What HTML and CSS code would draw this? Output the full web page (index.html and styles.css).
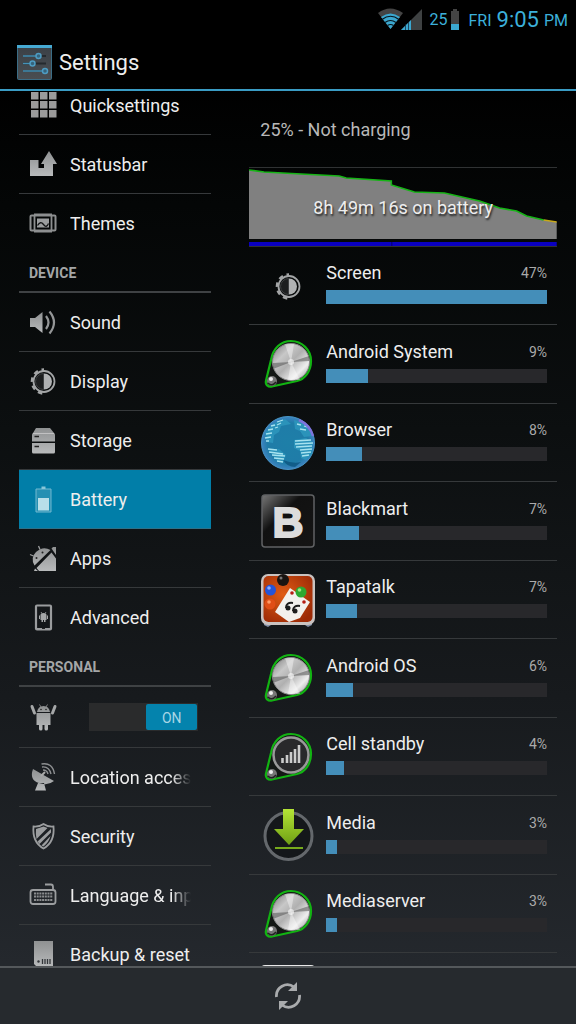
FILE: index.html
```
<!DOCTYPE html>
<html lang="en">
<head>
    <meta charset="UTF-8">
    <meta name="viewport" content="width=device-width, initial-scale=1.0">
    <title>Settings</title>
    <link rel="stylesheet" href="styles.css">
</head>
<body>
    <!-- Shared shapes -->
    <svg class="defs" aria-hidden="true">
        <defs>
            <linearGradient id="grey" x1="0" y1="0" x2="0" y2="1">
                <stop offset="0" stop-color="#8f9192"/>
                <stop offset="1" stop-color="#b8babb"/>
            </linearGradient>
            <linearGradient id="metal" x1="0" y1="0" x2="1" y2="1">
                <stop offset="0" stop-color="#777"/>
                <stop offset=".3" stop-color="#c8c8c8"/>
                <stop offset=".5" stop-color="#b0b0b0"/>
                <stop offset=".75" stop-color="#eee"/>
                <stop offset="1" stop-color="#888"/>
            </linearGradient>
            <radialGradient id="ocean" cx=".5" cy=".5" r=".55">
                <stop offset="0" stop-color="#1e7fa8"/>
                <stop offset=".7" stop-color="#1f7ca8"/>
                <stop offset="1" stop-color="#4c86cc"/>
            </radialGradient>
            <linearGradient id="gloss" x1="0" y1="0" x2="1" y2="1">
                <stop offset="0" stop-color="#777"/>
                <stop offset=".38" stop-color="#111"/>
                <stop offset="1" stop-color="#151515"/>
            </linearGradient>
            <radialGradient id="orange" cx=".4" cy=".4" r=".7">
                <stop offset="0" stop-color="#e05c14"/>
                <stop offset="1" stop-color="#9c2a06"/>
            </radialGradient>
            <linearGradient id="lime" x1="0" y1="0" x2="0" y2="1">
                <stop offset="0" stop-color="#b4e436"/>
                <stop offset="1" stop-color="#6f9f14"/>
            </linearGradient>
            <linearGradient id="tile" x1="0" y1="0" x2="0" y2="1">
                <stop offset="0" stop-color="#3a4046"/>
                <stop offset="1" stop-color="#4a4e52"/>
            </linearGradient>
            <symbol id="brightness" viewBox="0 0 28 28">
                <circle cx="15" cy="14.500" r="10.500" fill="none" stroke="#a3a5a6" stroke-width="1.800"/>
                <path d="M15 2.500a12 12 0 0 0 0 24" fill="none" stroke="#a3a5a6" stroke-width="2.600" stroke-dasharray="4.500 3.800" stroke-dashoffset="2"/>
                <path d="M15 6.500a8 8 0 0 1 0 16z" fill="#b0b2b3"/>
                <path d="M14.500 6.500a8 8 0 0 0 0 16z" fill="#1c1e1f" stroke="#4a4c4e" stroke-width=".8"/>
            </symbol>
            <symbol id="pin" viewBox="0 0 54 54">
                <path d="M10 23C12 11 20 4 30 4c11 0 20 9 20 20 0 10-6 18-14 20L11 49.500c-4 1-7-2-6-6z" fill="#141815" stroke="#12b312" stroke-width="2.200"/>
                <circle cx="11" cy="44" r="5" fill="#777"/>
                <circle cx="10" cy="42" r="2" fill="#eee"/>
                <path d="M7 46q4 4 8-1" fill="none" stroke="#222" stroke-width="1.500"/>
            </symbol>
            <symbol id="dial" viewBox="0 0 54 54">
                <use href="#pin"/>
                <circle cx="30" cy="25" r="18.500" fill="url(#metal)" stroke="#8c8c8c"/>
                <path d="M30 25 12 26v6zM30 25l18-6v5z" fill="#555" opacity=".55"/>
                <path d="M30 25 24 7h9zM30 25l-3 18h12z" fill="#fff" opacity=".4"/>
                <circle cx="30" cy="25" r="3" fill="#fff" opacity=".6"/>
            </symbol>
        </defs>
    </svg>

    <div class="status-bar">
        <svg class="signal" viewBox="0 0 46 24" aria-hidden="true">
            <path d="M1 6q12-9 25 0L13.500 22z" fill="#444"/>
            <path d="M4 10q9.500-7 19 0L13.500 22z" fill="#3ba7cf"/>
            <path d="M5 12.500q8.500-6.500 17 0M8 15.500q5.500-4 11 0M10.500 18.500q3-2 6 0" fill="none" stroke="#07141a" stroke-width="1.200"/>
            <path d="M45 2v21H24z" fill="#3e4142"/>
            <path d="M34 13v10H24z" fill="#3ba7cf"/>
            <path d="M28.500 17v6M31.500 15v8" stroke="#123" stroke-width=".7"/>
        </svg>
        <span class="level">25</span>
        <svg class="cell" viewBox="0 0 8 22" aria-hidden="true">
            <path d="M2 1h4v2h2v19H0V3h2z" fill="#444"/>
            <path d="M0 16h8v6H0z" fill="#3ba7cf"/>
        </svg>
        <span class="day">FRI</span>
        <span class="clock">9:05</span>
        <span class="day">PM</span>
    </div>

    <header class="title-bar">
        <svg class="logo" viewBox="0 0 35 35" aria-hidden="true">
            <rect x=".5" y=".5" width="34" height="34" rx="1" fill="url(#tile)" stroke="#3b6d86"/>
            <path d="M0 1.500h35" stroke="#46a9d2" stroke-width="3"/>
            <path d="M6 11h23M6 18.500h23M6 26h22" stroke="#252a2e" stroke-width="2"/>
            <path d="M6 11h13M6 18.500h7M6 26h19" stroke="#4592b8" stroke-width="1.300"/>
            <g fill="#36647c" stroke="#4e9cc2" stroke-width="1.500">
                <circle cx="21.500" cy="11" r="2.500"/>
                <circle cx="15.500" cy="18.500" r="2.500"/>
                <circle cx="28" cy="26" r="2.500"/>
            </g>
        </svg>
        <h1>Settings</h1>
    </header>

    <main>
        <nav class="menu">
            <a class="row" href="#quicksettings">
                <svg viewBox="0 0 28 28"><path d="M2 1h7.500v7.500H2zM11 1h7.500v7.500H11zM20 1h7.500v7.500H20zM2 10h7.500v7.500H2zM11 10h7.500v7.500H11zM20 10h7.500v7.500H20zM2 19h7.500v7.500H2zM11 19h7.500v7.500H11zM20 19h7.500v7.500H20z" fill="#9b9b9b"/></svg>
                <span>Quicksettings</span>
            </a>
            <a class="row" href="#statusbar">
                <svg viewBox="0 0 28 28"><path d="M1 10h8.500v8h5.500v-4h-3L20 1l8 13h-4v12H1z" fill="url(#grey)"/></svg>
                <span>Statusbar</span>
            </a>
            <a class="row last" href="#themes">
                <svg viewBox="0 0 28 28">
                    <rect x="1.500" y="6.500" width="25" height="15" rx="1" fill="none" stroke="#8d8f90" stroke-width="2"/>
                    <path d="M5 5.500h18M5 22.500h18" stroke="#8d8f90" stroke-width="2"/>
                    <path d="M5.500 6v16M22.500 6v16" stroke="#8d8f90" stroke-width="1.800"/>
                    <rect x="8" y="9.500" width="12" height="9" fill="#9c9e9f"/>
                    <path d="M8.500 16.500q3-5 6-1t5-1" fill="none" stroke="#151617" stroke-width="1.300"/>
                </svg>
                <span>Themes</span>
            </a>

            <h2>DEVICE</h2>
            <a class="row" href="#sound">
                <svg viewBox="0 0 28 28">
                    <path d="M1 10h5l7.500-6v21L6 19H1z" fill="url(#grey)"/>
                    <path d="M17 8q5 6.500 0 13M20.500 3.500q9 11 0 22" fill="none" stroke="#949697" stroke-width="2.200"/>
                </svg>
                <span>Sound</span>
            </a>
            <a class="row" href="#display">
                <svg><use href="#brightness"/></svg>
                <span>Display</span>
            </a>
            <a class="row" href="#storage">
                <svg viewBox="0 0 28 28">
                    <path d="M7 2h14l4 5q1 .5 1 2v6.500H3V9q0-1.500 1-2zM3 17h23v9q0 1.500-1.500 1.500h-20Q3 27.500 3 26z" fill="url(#grey)"/>
                    <path d="M4 7.500h21" stroke="#ccc" stroke-width=".8"/>
                    <path d="M5.500 10.500h4.500M5.500 20.500h4.500" stroke="#222" stroke-width="1.600"/>
                </svg>
                <span>Storage</span>
            </a>
            <a class="row active" href="#battery">
                <svg viewBox="0 0 28 28">
                    <path d="M7 4h15v23H7z" fill="#2590b3" stroke="#72b8d0"/>
                    <path d="M12.500 1.500h4V4h-4z" fill="#8ac6d9"/>
                    <path d="M9 13h11v12.500H9z" fill="#b9dfe9"/>
                </svg>
                <span>Battery</span>
            </a>
            <a class="row" href="#apps">
                <svg viewBox="0 0 28 28">
                    <path d="M5.500 21.500Q1 14 7 8q7-6.500 14.500-2zM7.500 24 22.500 8.500l4.500 6V27H10zM22.500 4.500 24 3h3v8zM5 27l1-2.500L9 27z" fill="url(#grey)"/>
                    <path d="M11 5.500 9.500 2M4.500 12 1 10.500" stroke="#9b9d9e" stroke-width="1.300"/>
                    <circle cx="13.500" cy="8.500" r="1" fill="#222"/>
                    <circle cx="7.500" cy="14" r="1" fill="#222"/>
                </svg>
                <span>Apps</span>
            </a>
            <a class="row last" href="#advanced">
                <svg viewBox="0 0 28 28">
                    <rect x="7" y="2.500" width="15" height="24" rx="1" fill="none" stroke="#9a9c9e" stroke-width="2.200"/>
                    <path d="M7 25.500h15" stroke="#9a9c9e"/>
                    <path d="M13 25.500h3" stroke="#222"/>
                    <path d="M11.500 12q0-2 3-2t3 2v5h-6zM10 12.500h1v3.500h-1zM18 12.500h1v3.500h-1zM12.500 17h1.500v2h-1.500zM15 17h1.500v2H15z" fill="#a5a7a8"/>
                    <path d="m12 9 1 1.500M17 9l-1 1.500" stroke="#a5a7a8" stroke-width=".8"/>
                </svg>
                <span>Advanced</span>
            </a>

            <h2>PERSONAL</h2>
            <div class="row toggle-row">
                <svg viewBox="0 0 28 28">
                    <path d="M8 9q1-6 6.500-6T21 9zM7.500 10h14v12h-14zM10 21h3.500v5q0 1.500-1.700 1.500T10 26zM15.500 21H19v5q0 1.500-1.700 1.500T15.500 26z" fill="url(#grey)"/>
                    <path d="m3 3.500 2.500 6.500M26 3.500 23.500 10" fill="none" stroke="#a5a7a8" stroke-width="3" stroke-linecap="round"/>
                    <path d="m10.500 1.500 1.500 2.500M18.500 1.500 17 4" stroke="#999" stroke-width=".8"/>
                    <circle cx="12" cy="6.500" r=".8" fill="#222"/>
                    <circle cx="17" cy="6.500" r=".8" fill="#222"/>
                </svg>
                <label class="switch">
                    <input type="checkbox" checked>
                    <span>ON</span>
                </label>
            </div>
            <a class="row" href="#location">
                <svg viewBox="0 0 28 28">
                    <path d="M4 6Q0 17 10 20q9 3 15-2zM9 20h6l2 7.500H6z" fill="url(#grey)"/>
                    <path d="m12 13 4-4" stroke="#aaa" stroke-width="2"/>
                    <path d="M13 4q7-1 9 7M12.500 1q11-2 13 10M14 7q4 0 5 4" fill="none" stroke="#8d8f91" stroke-width="1.400"/>
                </svg>
                <span class="fade">Location access</span>
            </a>
            <a class="row" href="#security">
                <svg viewBox="0 0 28 28">
                    <path d="M14.500 2q4 3 10 2.500Q26 20 14.500 26.500 3 20 4.500 4.500q6 .5 10-2.500z" fill="none" stroke="#9b9d9f" stroke-width="1.800"/>
                    <path d="m7 7 7.500-2.500 4 1.500L7.500 17Q6.500 12 7 7zM8.500 19.500 22 7v3.500L10.500 22zM12.500 23.500 21.500 14Q20 20 14.500 24.500z" fill="#9b9d9f"/>
                </svg>
                <span>Security</span>
            </a>
            <a class="row" href="#language">
                <svg viewBox="0 0 28 28">
                    <rect x="1.500" y="9" width="25" height="14" rx="2.500" fill="none" stroke="#9b9d9f" stroke-width="1.800"/>
                    <path d="M5 12.500h19M5 15.500h19M5 19h19" stroke="#8b8d8f" stroke-width="2.200" stroke-dasharray="2 .7"/>
                    <path d="M16 3.500h6q2 0 2 2.500v3" fill="none" stroke="#9b9d9f" stroke-width="1.800"/>
                </svg>
                <span class="fade">Language &amp; input</span>
            </a>
            <a class="row" href="#backup">
                <svg viewBox="0 0 28 28">
                    <path d="M5 1h19v26H8l-3-3z" fill="url(#grey)"/>
                    <path d="M13.500 19v5M16 19v5M18.500 19v5M21 19v5" stroke="#33363a" stroke-width="1.300"/>
                    <circle cx="9.500" cy="21.500" r="1.200" fill="#33363a"/>
                </svg>
                <span>Backup &amp; reset</span>
            </a>
        </nav>

        <section class="detail">
            <p class="state">25% - Not charging</p>
            <div class="chart">
                <svg viewBox="0 0 307 78" preserveAspectRatio="none" aria-hidden="true">
                    <path d="M0 2 15 4 52 6 90 8 97 10 142 13V17L152 20 165 24 195 25 230 33 250 40 267 43 277 48 294 52 307 54V71H0z" fill="#808080"/>
                    <path d="M0 2 15 4 52 6 90 8 97 10 142 13V17L152 20 165 24 195 25 230 33 250 40 267 43 277 48 294 52" fill="none" stroke="#16b416" stroke-width="1.600"/>
                    <path d="m294 52 13 2" stroke="#c8a818" stroke-width="1.600"/>
                    <path d="M0 76h307" stroke="#0a00c0" stroke-width="4"/>
                    <path d="M142.500 74v4" stroke="#000070"/>
                </svg>
                <p>8h 49m 16s on battery</p>
            </div>

            <ul class="usage">
                <li>
                    <svg class="small" viewBox="0 0 28 28"><use href="#brightness"/></svg>
                    <div class="info">
                        <div class="line"><span>Screen</span><small>47%</small></div>
                        <div class="bar"><div style="width: 100%"></div></div>
                    </div>
                </li>
                <li>
                    <svg><use href="#dial"/></svg>
                    <div class="info">
                        <div class="line"><span>Android System</span><small>9%</small></div>
                        <div class="bar"><div style="width: 19%"></div></div>
                    </div>
                </li>
                <li>
                    <svg viewBox="0 0 54 54">
                        <circle cx="27" cy="27" r="26.500" fill="url(#ocean)" stroke="#4795c4"/>
                        <path d="M4 17q8-12 20-14l6 5-10 2-2 6-5 3-1 8-6-1zM33 4q15 3 18 16l-8 1-4-6-5-2zM33 24l12-2 7 4-1 12-6 6-5-2-1-7-6-3zM8 34l10-1 7 6-3 8-6-2z" fill="#2b93ba"/>
                        <path d="M7 14l5-1M14 12l3-1M5 18l6-1M10 10l4-1M16 9l4-2M4 22l6-1M5 25l3 0M16 6l6-2M34 25l16-1M34 28l18-1M35 31l16-1M39 34l12-1M40 37l10-1M41 40l7-1M7 33l9 1M8 36l14 2M11 39l13 1M13 42l10 1M16 45l6 1M36 8l4 1M43 10l3 1M39 13l6 1" stroke="#a6e2ef" stroke-width="1.300"/>
                        <path d="M22 44q10 4 18 2l-6 5q-8 0-12-7z" fill="#0d5580" opacity=".8"/>
                        <path d="M38 4q11 5 14 16" fill="none" stroke="#7e74dc" stroke-width="2.500"/>
                    </svg>
                    <div class="info">
                        <div class="line"><span>Browser</span><small>8%</small></div>
                        <div class="bar"><div style="width: 16%"></div></div>
                    </div>
                </li>
                <li>
                    <svg viewBox="0 0 54 54">
                        <rect x="1" y="1" width="52" height="52" rx="3" fill="url(#gloss)" stroke="#606264" stroke-width="1.500"/>
                        <text x="27" y="43" text-anchor="middle" class="letter">B</text>
                    </svg>
                    <div class="info">
                        <div class="line"><span>Blackmart</span><small>7%</small></div>
                        <div class="bar"><div style="width: 15%"></div></div>
                    </div>
                </li>
                <li>
                    <svg viewBox="0 0 54 54">
                        <path d="M3 48h48v4l-4 2-3-2H10l-3 2-4-2z" fill="#8592a8"/>
                        <rect x="0" y="1" width="54" height="51" rx="7" fill="#c9c2c0"/>
                        <rect x="2.500" y="3" width="49" height="46" rx="5" fill="url(#orange)"/>
                        <circle cx="22" cy="7" r="6" fill="#191411"/>
                        <circle cx="20" cy="5" r="1.500" fill="#777"/>
                        <circle cx="9.500" cy="17" r="5.500" fill="#2454d8"/>
                        <circle cx="8" cy="15" r="1.800" fill="#8caeff"/>
                        <circle cx="9" cy="31" r="5.500" fill="#e04e16"/>
                        <circle cx="8" cy="29" r="1.800" fill="#ff9b67"/>
                        <path d="m29 15 20 14-10 16-11 4-14-10z" fill="#f3f1ed"/>
                        <circle cx="40" cy="19" r="5.500" fill="#2da931"/>
                        <circle cx="38.500" cy="17" r="1.800" fill="#98e47b"/>
                        <circle cx="31" cy="20" r="1.800" fill="#b61c12"/>
                        <circle cx="43" cy="29" r="1.800" fill="#b61c12"/>
                        <path d="M32 30q-7-1-7 5M39 33q-7-1-7 5" fill="none" stroke="#1d1d1d" stroke-width="2"/>
                        <circle cx="27" cy="35" r="2.500" fill="#1d1d1d"/>
                        <circle cx="34" cy="38" r="2.500" fill="#1d1d1d"/>
                    </svg>
                    <div class="info">
                        <div class="line"><span>Tapatalk</span><small>7%</small></div>
                        <div class="bar"><div style="width: 14%"></div></div>
                    </div>
                </li>
                <li>
                    <svg><use href="#dial"/></svg>
                    <div class="info">
                        <div class="line"><span>Android OS</span><small>6%</small></div>
                        <div class="bar"><div style="width: 12%"></div></div>
                    </div>
                </li>
                <li>
                    <svg viewBox="0 0 54 54">
                        <use href="#pin"/>
                        <circle cx="30" cy="25" r="17.500" fill="#29292b" stroke="#999" stroke-width="2.500"/>
                        <path d="M21.500 33v-5M26 33v-8M30 33V22M34 33V19M38 33V15" stroke="#ccc" stroke-width="2.600"/>
                    </svg>
                    <div class="info">
                        <div class="line"><span>Cell standby</span><small>4%</small></div>
                        <div class="bar"><div style="width: 8%"></div></div>
                    </div>
                </li>
                <li>
                    <svg viewBox="0 0 54 54">
                        <circle cx="27.500" cy="28" r="23.500" fill="#14171a" stroke="#64686c" stroke-width="3"/>
                        <path d="M22 1h11v20h10L28 37 13 21h9z" fill="url(#lime)"/>
                        <path d="M14 40h28" stroke="#76aa1c" stroke-width="2"/>
                    </svg>
                    <div class="info">
                        <div class="line"><span>Media</span><small>3%</small></div>
                        <div class="bar"><div style="width: 5%"></div></div>
                    </div>
                </li>
                <li>
                    <svg><use href="#dial"/></svg>
                    <div class="info">
                        <div class="line"><span>Mediaserver</span><small>3%</small></div>
                        <div class="bar"><div style="width: 5%"></div></div>
                    </div>
                </li>
                <li>
                    <svg viewBox="0 0 54 54">
                        <rect width="54" height="54" rx="4" fill="#e8e8e8"/>
                        <path d="M5 3h44" stroke="#555" stroke-width="1.500" stroke-dasharray="5 2"/>
                    </svg>
                </li>
            </ul>
        </section>
    </main>

    <footer>
        <button type="button" aria-label="Refresh">
            <svg viewBox="0 0 28 28">
                <path d="M2.500 15A11 11 0 0 1 20 5M25.500 13A11 11 0 0 1 8 23" fill="none" stroke="#a9abad" stroke-width="2.800"/>
                <path d="M23 0v9h-9zM5 28v-9h9z" fill="#a9abad"/>
            </svg>
        </button>
    </footer>
</body>
</html>
```

FILE: styles.css
```
* {
    box-sizing: border-box;
}
body {
    margin: 0;
    height: 100vh;
    display: flex;
    flex-direction: column;
    overflow: hidden;
    background: linear-gradient(#000 0%, #000 8%, #040606 20%, #0c0f10 42%, #171a1d 68%, #24282d 94%, #272c30 100%);
    color: #eee;
    font-family: Roboto, sans-serif;
    font-size: 18px;
}
h1, h2, p, ul {
    margin: 0;
    padding: 0;
    font-weight: 400;
}
svg {
    flex: none;
}
.defs {
    position: absolute;
    width: 0;
    height: 0;
}

/* Status bar */
.status-bar {
    flex: none;
    height: 38px;
    display: flex;
    justify-content: flex-end;
    align-items: center;
    padding: 0 8px;
    color: #3cb0da;
}
.signal {
    width: 46px;
    height: 24px;
    margin-right: 6px;
}
.level {
    font-size: 16px;
}
.cell {
    width: 8px;
    height: 22px;
    margin: 0 9px 0 4px;
}
.day {
    font-size: 16px;
    padding-top: 3px;
}
.clock {
    font-size: 22px;
    margin: 0 5px;
}

/* Title */
.title-bar {
    flex: none;
    height: 53px;
    display: flex;
    align-items: center;
    gap: 7px;
    padding: 0 17px 2px;
    border-bottom: 2px solid #3a9cc4;
}
.logo {
    width: 35px;
    height: 35px;
}
h1 {
    font-size: 22px;
}

main {
    flex: 1;
    min-height: 0;
    display: grid;
    grid-template-columns: 5fr 8fr;
    gap: 38px;
    padding: 0 19px;
    overflow: hidden;
}

/* Left menu, scrolled a little past its first row */
.menu {
    min-width: 0;
    margin-top: -15px;
}
.row {
    display: flex;
    align-items: center;
    gap: 13px;
    height: 59px;
    padding: 0 20px 0 10px;
    border-bottom: 1px solid #36393b;
    color: #eee;
    text-decoration: none;
}
.row.last {
    border-bottom-color: transparent;
}
.row svg {
    width: 28px;
    height: 28px;
}
.row > span {
    flex: 1;
    overflow: hidden;
    white-space: nowrap;
}
.row .fade {
    -webkit-mask-image: linear-gradient(to right, #000 84%, transparent);
    mask-image: linear-gradient(to right, #000 84%, transparent);
}
.row.active {
    background: #017ea8;
    border-bottom-color: #2d7188;
}
.menu h2 {
    height: 40px;
    padding: 0 10px;
    border-bottom: 2px solid #3f4244;
    color: #a4a6a7;
    font-size: 14px;
    font-weight: 700;
    line-height: 41px;
}
.toggle-row {
    height: 61px;
    padding-right: 13px;
    justify-content: space-between;
}
.switch {
    position: relative;
    display: flex;
    justify-content: flex-end;
    width: 109px;
    height: 28px;
    padding: 1px;
    background: #2a2b2c;
}
.switch input {
    position: absolute;
    inset: 0;
    width: 100%;
    height: 100%;
    margin: 0;
    opacity: 0;
}
.switch span {
    width: 51px;
    border-radius: 2px;
    background: #0483ad;
    color: #a8d6e5;
    font-size: 14px;
    line-height: 28px;
    text-align: center;
}

/* Battery details */
.detail {
    min-width: 0;
}
.state {
    height: 76px;
    padding: 0 11px;
    border-bottom: 1px solid #303233;
    box-sizing: content-box;
    color: #b8b8b8;
    line-height: 78px;
}
.chart {
    position: relative;
    height: 79px;
    border-bottom: 1px solid #303233;
}
.chart svg {
    display: block;
    width: 100%;
    height: 78px;
}
.chart p {
    position: absolute;
    inset: 0;
    line-height: 80px;
    text-align: center;
    text-shadow: 1px 2px 2px #222;
}
.usage {
    list-style: none;
}
.usage li {
    display: flex;
    align-items: center;
    gap: 11px;
    height: 78px;
    padding: 0 10px 0 12px;
    border-bottom: 1px solid #36393b;
}
.usage li:nth-child(even) {
    height: 79px;
}
.usage svg {
    width: 54px;
    height: 54px;
}
.usage .small {
    width: 28px;
    height: 28px;
    margin: 0 13px;
}
.info {
    flex: 1;
    padding-bottom: 6px;
}
.line {
    display: flex;
    justify-content: space-between;
    margin-bottom: 5px;
    line-height: 24px;
}
.line small {
    color: #aaa;
    font-size: 14px;
}
.bar {
    height: 14px;
    background: #28282b;
}
.bar div {
    height: 100%;
    background: #448eb9;
}
.letter {
    fill: #dcdcdc;
    stroke: #dcdcdc;
    stroke-width: 2px;
    font: bold 43px "Liberation Sans", sans-serif;
}

/* Bottom action bar */
footer {
    flex: none;
    height: 58px;
    display: flex;
    justify-content: center;
    align-items: center;
    border-top: 2px solid #54585b;
    background: #262a2e;
}
button {
    display: flex;
    padding: 14px;
    border: none;
    background: none;
}
button svg {
    width: 28px;
    height: 28px;
}
```
